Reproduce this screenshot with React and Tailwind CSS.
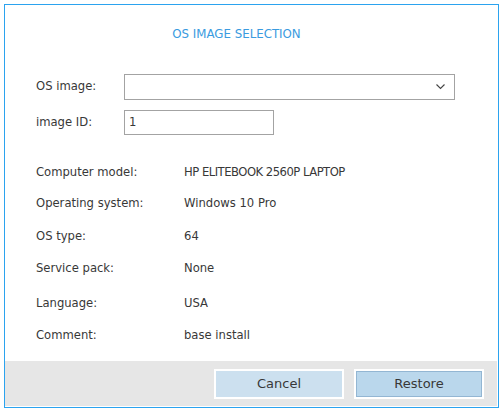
import React from 'react';

const rows = [
  { label: 'Computer model:', value: 'HP ELITEBOOK 2560P LAPTOP', mt: 'mt-[28px]' },
  { label: 'Operating system:', value: 'Windows 10 Pro', mt: 'mt-[11px]' },
  { label: 'OS type:', value: '64', mt: 'mt-[13px]' },
  { label: 'Service pack:', value: 'None', mt: 'mt-[12px]' },
  { label: 'Language:', value: 'USA', mt: 'mt-[15px]' },
  { label: 'Comment:', value: 'base install', mt: 'mt-[12px]' },
];

export default function App() {
  return (
    <div className="w-[503px] h-[413px] bg-white pl-[4px] pt-[4px] text-[#383838] text-[11.6px]" style={{ fontFamily: '"DejaVu Sans", sans-serif' }}>
      <div className="w-[495px] h-[404px] border border-[#2ba3ef] flex flex-col">
        <div className="h-[60px] flex items-center justify-center pr-[30px] text-[11.8px] text-[#3a9be0]">
          OS IMAGE SELECTION
        </div>

        <div className="flex-1 pl-[31px]">
          <div className="flex items-center mt-[9px]">
            <div className="w-[88px]">OS image:</div>
            <div className="w-[331px] h-[26px] border border-[#a3a3a3] flex items-center justify-end pr-[9px]">
              <svg width="9" height="6" viewBox="0 0 9 6">
                <polyline points="0.5,0.5 4.5,4.5 8.5,0.5" fill="none" stroke="#444" strokeWidth="1.1" />
              </svg>
            </div>
          </div>
          <div className="flex items-center mt-[10px]">
            <div className="w-[88px]">image ID:</div>
            <div className="w-[150px] h-[25px] border border-[#a3a3a3] flex items-center pl-[4px]">1</div>
          </div>

          {rows.map((r) => (
            <div key={r.label} className={`flex items-center h-[20px] ${r.mt}`}>
              <div className="w-[148px]">{r.label}</div>
              <div className={r.label === 'Computer model:' ? 'tracking-[-0.5px]' : ''}>{r.value}</div>
            </div>
          ))}
        </div>

        <div className="h-[45px] mr-[1px] mb-[1px] bg-[#e6e6e6] flex justify-end items-start pt-[8px] pr-[13px] gap-[10px] text-[13px]">
          <div className="w-[130px] h-[30px] border-2 border-white bg-[#cce0ef] flex items-center justify-center">
            Cancel
          </div>
          <div className="w-[130px] h-[30px] border-2 border-white">
            <div className="w-full h-full border border-[#93b6d3] bg-[#bad7ec] flex items-center justify-center">
              Restore
            </div>
          </div>
        </div>
      </div>
    </div>
  );
}
